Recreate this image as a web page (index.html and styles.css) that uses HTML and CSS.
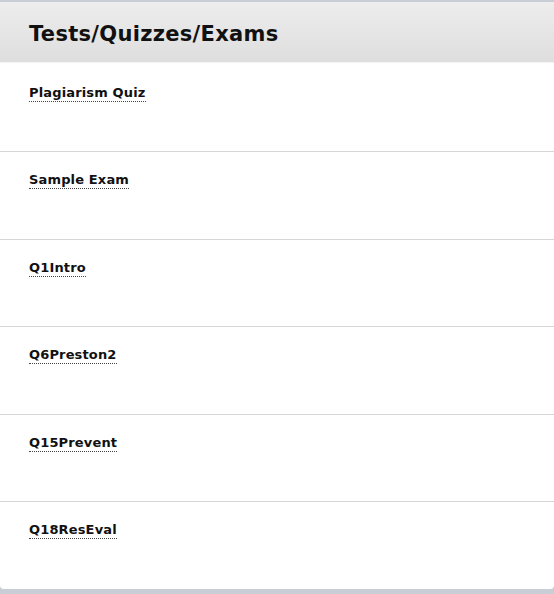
FILE: index.html
```html
<!DOCTYPE html>
<html lang="en">
<head>
  <meta charset="UTF-8" />
  <meta name="viewport" content="width=device-width, initial-scale=1.0" />
  <title>Tests/Quizzes/Exams</title>
  <link rel="stylesheet" href="styles.css">
</head>
<body>
  <div class="panel">
    <h1 class="panel-title">Tests/Quizzes/Exams</h1>

    <ul class="test-list">
      <li class="test-item"><a href="#">Plagiarism Quiz</a></li>
      <li class="test-item"><a href="#">Sample Exam</a></li>
      <li class="test-item"><a href="#">Q1Intro</a></li>
      <li class="test-item"><a href="#">Q6Preston2</a></li>
      <li class="test-item"><a href="#">Q15Prevent</a></li>
      <li class="test-item"><a href="#">Q18ResEval</a></li>
    </ul>
  </div>
</body>
</html>
```

FILE: styles.css
```css
body {
  margin: 0;
  background: #c9cdd6;
  font-family: "DejaVu Sans", "Liberation Sans", sans-serif;
  color: #111;
  height: 594px;
  overflow: hidden;
}

.panel {
  margin-top: 2px;
  height: 587px;
  background: #fff;
  border-radius: 0 0 4px 4px;
  overflow: hidden;
}

.panel-title {
  margin: 0;
  height: 61px;
  box-sizing: border-box;
  padding: 20px 29px 0;
  font-size: 21px;
  font-weight: bold;
  letter-spacing: 0.3px;
  background: linear-gradient(180deg, #ededed, #dedede);
  border-bottom: 1px solid #f4f4f4;
}

.test-list {
  list-style: none;
  margin: 0;
  padding: 1.5px 0 0;
}

.test-item {
  height: 87.5px;
  box-sizing: border-box;
  padding: 20px 29px 0;
  border-bottom: 1px solid #d6d6d6;
  font-size: 13px;
  font-weight: bold;
  letter-spacing: 0.15px;
}

.test-item:last-child {
  border-bottom: none;
}

.test-item a {
  color: #111;
  text-decoration: none;
  border-bottom: 1px dotted #444;
  padding-bottom: 1px;
}
```
